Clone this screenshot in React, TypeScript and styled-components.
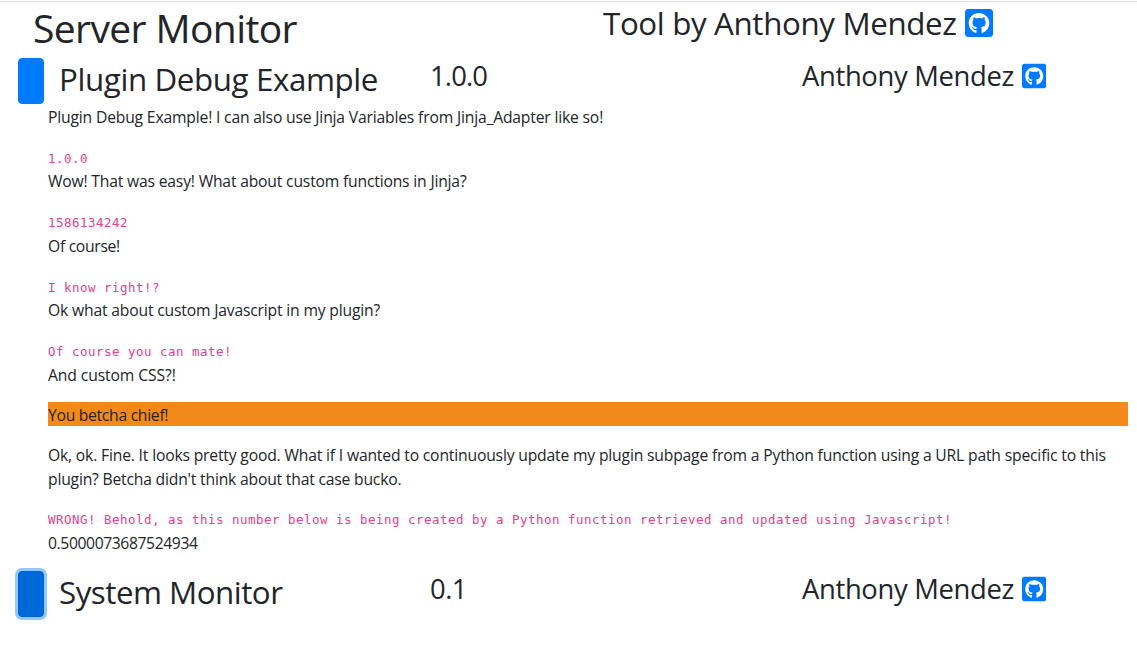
import React from 'react';
import styled, { createGlobalStyle } from 'styled-components';
import { FaGithubSquare } from 'react-icons/fa';

const GlobalStyle = createGlobalStyle`
  *, *::before, *::after { box-sizing: border-box; }
  body {
    margin: 0;
    background: #fff;
    color: #212529;
    font-family: "Open Sans", "Segoe UI", sans-serif;
    font-size: 15.7px;
    line-height: 24px;
  }
`;

const Page = styled.main`
  min-height: 100vh;
  padding-top: 1px;
  background: linear-gradient(#dee2e6, #dee2e6) 0 1px / 100% 1px no-repeat;
`;

const Header = styled.header`
  display: grid;
  grid-template-columns: 570px 1fr;
  height: 57px;
  padding: 3px 0 0 33px;
`;

const Title = styled.h1<{ $track: number }>`
  margin: 0;
  font-size: 39px;
  font-weight: 400;
  line-height: 48px;
  letter-spacing: ${(p) => p.$track}px;
`;

const Heading = styled.h2<{ $track: number }>`
  display: flex;
  align-items: flex-start;
  margin: 0;
  font-size: 31.3px;
  font-weight: 400;
  line-height: 38.4px;
  white-space: nowrap;
  letter-spacing: ${(p) => p.$track}px;
`;

const SubHeading = styled.h3<{ $track: number }>`
  display: flex;
  align-items: flex-start;
  margin: 0;
  font-size: 27.4px;
  font-weight: 400;
  line-height: 33.6px;
  white-space: nowrap;
  letter-spacing: ${(p) => p.$track}px;
`;

const RepoLink = styled.a<{ $size: number; $top: number }>`
  display: flex;
  margin: ${(p) => p.$top}px 0 0 8px;
  color: #007bff;

  svg {
    display: block;
    width: ${(p) => p.$size * 0.875}px;
    height: ${(p) => p.$size}px;
  }
`;

const PluginRow = styled.section`
  display: grid;
  grid-template-columns: 26px 371px 372px 1fr;
  height: 46px;
  padding-left: 18px;

  ${Heading} { margin: 2px 0 0 15px; }
  ${SubHeading} { margin: 1px 0 0 15px; }
`;

const Toggle = styled.button<{ $active?: boolean }>`
  height: 46px;
  padding: 0;
  border: 1px solid ${(p) => (p.$active ? '#0062cc' : '#007bff')};
  border-radius: 4px;
  background: ${(p) => (p.$active ? '#0069d9' : '#007bff')};
  box-shadow: ${(p) => (p.$active ? '0 0 0 3px rgba(38, 143, 255, 0.5)' : 'none')};
`;

const Subpage = styled.div`
  height: 467px;
  padding: 0.4px 9px 0 48px;
`;

const Line = styled.p<{ $track: number }>`
  margin: 0;
  padding: 0.67px 0 15.33px;
  letter-spacing: ${(p) => p.$track}px;
  white-space: nowrap;
`;

const Banner = styled.p`
  margin: 0 0 16px;
  padding-top: 2px;
  background: #f28918;
  line-height: 22px;
  letter-spacing: -0.29px;
`;

const Code = styled.code`
  display: block;
  height: 24.4px;
  padding-top: 0.6px;
  color: #e83e8c;
  font-family: "DejaVu Sans Mono", Consolas, monospace;
  font-size: 12.5px;
  line-height: 28.2px;
  letter-spacing: 0.475px;
  white-space: nowrap;
`;

const Sub = styled.span<{ $track: number }>`
  letter-spacing: ${(p) => p.$track}px;
`;

const Author = () => (
  <SubHeading $track={-0.33}>
    Anthony Mendez
    <RepoLink $size={28} $top={2.5}>
      <FaGithubSquare />
    </RepoLink>
  </SubHeading>
);

export default function App() {
  return (
    <>
      <GlobalStyle />
      <Page>
        <Header>
          <Title $track={-0.6}>Server Monitor</Title>
          <Heading $track={-0.35}>
            Tool by Anthony Mendez
            <RepoLink $size={32} $top={3}>
              <FaGithubSquare />
            </RepoLink>
          </Heading>
        </Header>

        <PluginRow>
          <Toggle aria-label="Toggle plugin" />
          <Heading $track={-0.38}>Plugin Debug Example</Heading>
          <SubHeading $track={-0.85}>1.0.0</SubHeading>
          <Author />
        </PluginRow>

        <Subpage>
          <Line $track={-0.18}>
            Plugin Debug Example! I can also use Jinja Variables from Jinja_Adapter like so!
          </Line>
          <Code>1.0.0</Code>
          <Line $track={-0.19}>Wow! That was easy! What about custom functions in Jinja?</Line>
          <Code>1586134242</Code>
          <Line $track={-0.3}>Of course!</Line>
          <Code>I know right!?</Code>
          <Line $track={-0.18}>Ok what about custom Javascript in my plugin?</Line>
          <Code>Of course you can mate!</Code>
          <Line $track={-0.11}>And custom CSS?!</Line>
          <Banner>You betcha chief!</Banner>
          <Line $track={-0.18}>
            Ok, ok. Fine. It looks pretty good. What if I wanted to continuously update my plugin
            subpage from a Python function using a URL path specific to this
            <br />
            <Sub $track={-0.2}>plugin? Betcha didn't think about that case bucko.</Sub>
          </Line>
          <Code>
            WRONG! Behold, as this number below is being created by a Python function retrieved and
            updated using Javascript!
          </Code>
          <Line $track={-0.39}>0.5000073687524934</Line>
        </Subpage>

        <PluginRow>
          <Toggle $active aria-label="Toggle plugin" />
          <Heading $track={-0.5}>System Monitor</Heading>
          <SubHeading $track={-0.5}>0.1</SubHeading>
          <Author />
        </PluginRow>
      </Page>
    </>
  );
}
